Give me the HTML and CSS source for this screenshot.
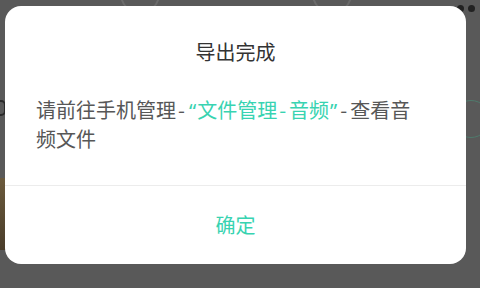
FILE: index.html
```html
<!DOCTYPE html>
<html lang="zh-CN">
<head>
<meta charset="utf-8">
<link rel="stylesheet" href="styles.css">
</head>
<body>
<div class="backdrop">
  <span class="bg-circle bg-c1"></span>
  <span class="bg-circle bg-c2"></span>
  <span class="bg-dot bg-d1"></span>
  <span class="bg-dot bg-d2"></span>
  <span class="bg-ring"></span>
  <span class="bg-photo"></span>
  <span class="bg-zero"></span>
</div>
<div class="dialog">
  <div class="title">导出完成</div>
  <div class="message">请前往手机管理<span class="dash">-</span><span class="hl"><span class="q ql">“</span>文件管理<span class="dash">-</span>音频<span class="q qr">”</span></span><span class="dash">-</span>查看音频文件</div>
  <div class="actions">
    <div class="btn">确定</div>
  </div>
</div>
</body>
</html>
```
FILE: styles.css
```css
html, body {
  margin: 0;
  padding: 0;
}
body {
  width: 480px;
  height: 288px;
  overflow: hidden;
  background: #595959;
  font-family: "Noto Sans CJK SC", "Noto Sans", sans-serif;
  position: relative;
}
.backdrop {
  position: absolute;
  inset: 0;
}
.bg-circle {
  position: absolute;
  width: 36px;
  height: 36px;
  border-radius: 50%;
  border: 2px solid #6a6a6a;
}
.bg-c1 { left: 120px; top: -26px; }
.bg-c2 { left: 312px; top: -26px; }
.bg-dot {
  position: absolute;
  width: 7px;
  height: 7px;
  border-radius: 50%;
  background: #222;
}
.bg-d1 { left: 457px; top: 5px; }
.bg-d2 { left: 468px; top: 5px; }
.bg-ring {
  position: absolute;
  left: 452px;
  top: 100px;
  width: 36px;
  height: 36px;
  border-radius: 50%;
  border: 1px solid #4f7a6c;
}
.bg-photo {
  position: absolute;
  left: 0;
  top: 178px;
  width: 8px;
  height: 72px;
  background: linear-gradient(#6b5a3c, #4a3d2a);
}
.bg-zero {
  position: absolute;
  left: -6px;
  top: 100px;
  width: 8px;
  height: 12px;
  border: 2px solid #2a2a2a;
  border-radius: 5px;
}
.dialog {
  position: absolute;
  left: 5px;
  top: 6px;
  width: 461px;
  height: 258px;
  background: #fff;
  border-radius: 16px;
  display: flex;
  flex-direction: column;
}
.title {
  margin-top: 33px;
  height: 26px;
  line-height: 26px;
  font-size: 20px;
  color: #333;
  text-align: center;
}
.message {
  margin-top: 31px;
  padding: 0 40px 0 31px;
  font-size: 20px;
  line-height: 28px;
  color: #575757;
  height: 89px;
}
.hl {
  color: #38d3b1;
}
.dash {
  margin: 0 3px 0 2px;
}
.q {
  font-family: "Noto Sans", sans-serif;
}
.ql {
  margin-left: 1px;
  margin-right: 1px;
}
.qr {
  margin-left: 1px;
  margin-right: 1px;
}
.actions {
  border-top: 1px solid #ececec;
  flex: 1;
  display: flex;
  align-items: center;
  justify-content: center;
}
.btn {
  font-size: 20px;
  color: #38d3b1;
  line-height: 24px;
}
```
